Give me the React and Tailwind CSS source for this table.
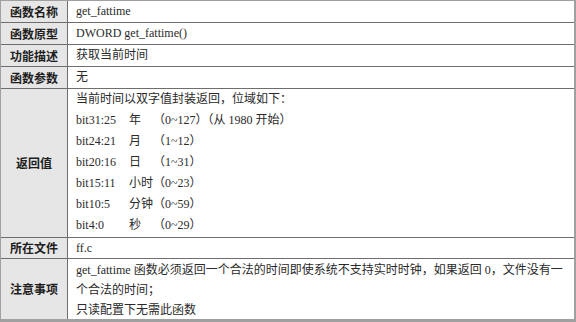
import React from 'react';

const serif = { fontFamily: '"Liberation Serif", "Noto Sans CJK SC", serif' };

function Row({ label, height, children, last }) {
  return (
    <div className={`flex ${last ? '' : 'border-b border-[#6e6e6e]'}`} style={{ height }}>
      <div
        className="w-[67px] shrink-0 flex items-center justify-center bg-[#e6e6e6] border-r border-[#6e6e6e] text-[12px] font-semibold text-[#1e1e1e]"
        style={{ fontFamily: '"Noto Sans CJK SC", sans-serif' }}
      >
        {label}
      </div>
      <div className="flex-1 pl-2 text-[12px] text-[#2a2a2a]" style={serif}>
        {children}
      </div>
    </div>
  );
}

const bits = [
  ['bit31:25', '年　', '（0~127）（从 1980 开始）'],
  ['bit24:21', '月　', '（1~12）'],
  ['bit20:16', '日　', '（1~31）'],
  ['bit15:11', '小时', '（0~23）'],
  ['bit10:5', '分钟', '（0~59）'],
  ['bit4:0', '秒　', '（0~29）'],
];

export default function App() {
  return (
    <div className="w-[576px] h-[322px] bg-white">
      <div className="w-[576px] h-[322px] border-t border-l border-r-2 border-b-[3px] border-[#a0a0a0] flex flex-col">
        <Row label="函数名称" height={22}>
          <div className="leading-[21px]">get_fattime</div>
        </Row>
        <Row label="函数原型" height={22}>
          <div className="leading-[21px]">DWORD get_fattime()</div>
        </Row>
        <Row label="功能描述" height={22}>
          <div className="leading-[21px]">获取当前时间</div>
        </Row>
        <Row label="函数参数" height={22}>
          <div className="leading-[21px]">无</div>
        </Row>
        <Row label="返回值" height={149}>
          <div className="leading-[21px]">
            <div>当前时间以双字值封装返回，位域如下：</div>
            {bits.map(([b, name, range]) => (
              <div key={b} className="flex whitespace-nowrap">
                <span className="w-[53px] shrink-0">{b}</span>
                <span className="w-[24px] shrink-0">{name}</span>
                <span>{range}</span>
              </div>
            ))}
          </div>
        </Row>
        <Row label="所在文件" height={21}>
          <div className="leading-[20px]">ff.c</div>
        </Row>
        <Row label="注意事项" height={60} last>
          <div className="leading-[20px] pt-px whitespace-nowrap">
            <div>get_fattime 函数必须返回一个合法的时间即使系统不支持实时时钟，如果返回 0，文件没有一</div>
            <div>个合法的时间；</div>
            <div>只读配置下无需此函数</div>
          </div>
        </Row>
      </div>
    </div>
  );
}
